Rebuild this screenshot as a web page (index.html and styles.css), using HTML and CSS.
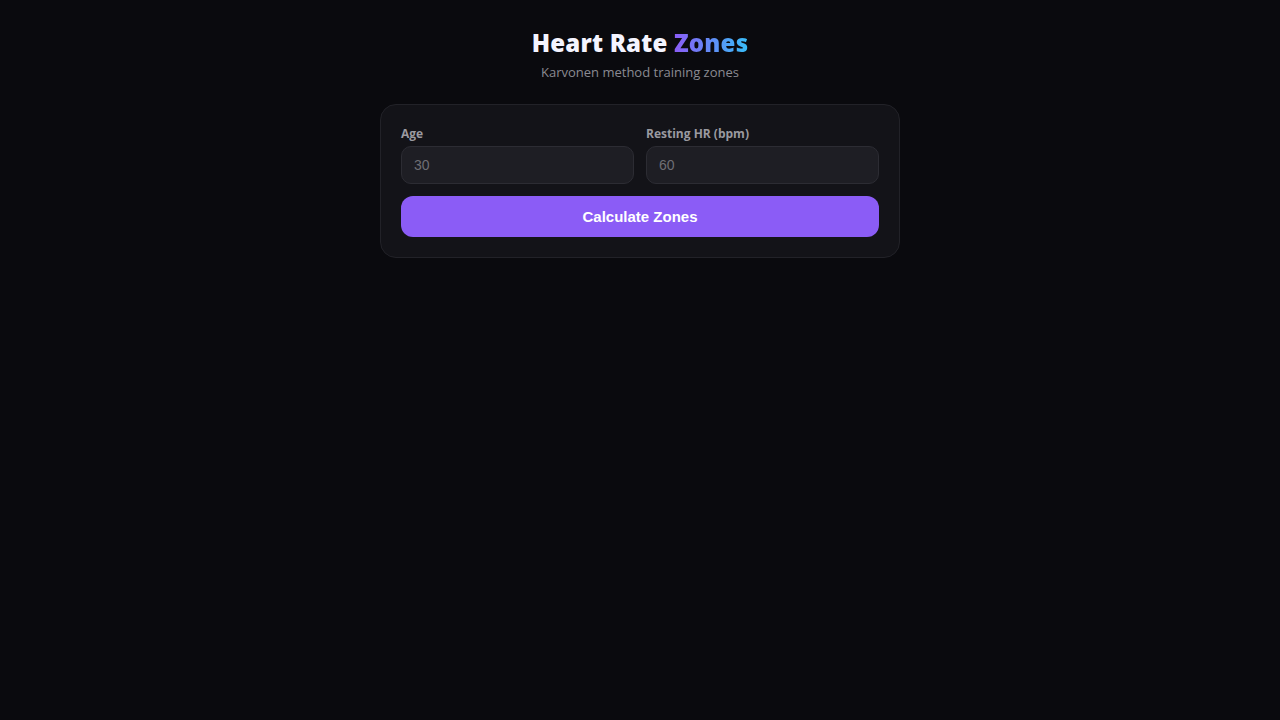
FILE: index.html
```html
<!DOCTYPE html>
<html lang="en">
<head>
<meta charset="utf-8">
<title>Heart Rate Zones</title>
<link rel="stylesheet" href="styles.css">
</head>
<body>
<main class="page">
  <header class="header">
    <h1 class="title">Heart Rate <span class="accent">Zones</span></h1>
    <p class="subtitle">Karvonen method training zones</p>
  </header>
  <section class="card">
    <div class="fields">
      <label class="field">
        <span class="label">Age</span>
        <input class="input" type="text" placeholder="30">
      </label>
      <label class="field">
        <span class="label">Resting HR (bpm)</span>
        <input class="input" type="text" placeholder="60">
      </label>
    </div>
    <button class="btn" type="button">Calculate Zones</button>
  </section>
</main>
</body>
</html>
```

FILE: styles.css
```css
* { box-sizing: border-box; }
html, body { margin: 0; padding: 0; }
body {
  background: #0a0a0e;
  min-height: 720px;
  font-family: "Open Sans", "Noto Sans", sans-serif;
  color: #e5e5ea;
}
.page {
  display: flex;
  flex-direction: column;
  align-items: center;
  padding-top: 28px;
}
.header { text-align: center; margin-bottom: 23px; }
.title {
  margin: 0;
  font-size: 24px;
  font-weight: 800;
  line-height: 30px;
  color: #f4f4ff;
  letter-spacing: 0.2px;
}
.accent {
  background: linear-gradient(90deg, #8b5cf6, #38bdf8);
  -webkit-background-clip: text;
  background-clip: text;
  color: transparent;
}
.subtitle {
  margin: 5px 0 0;
  font-size: 13px;
  line-height: 18px;
  color: #8a8a92;
}
.card {
  width: 520px;
  background: #131318;
  border: 1px solid #222228;
  border-radius: 16px;
  padding: 21px 20px 20px;
  display: flex;
  flex-direction: column;
  gap: 12px;
}
.fields {
  display: grid;
  grid-template-columns: 1fr 1fr;
  gap: 12px;
}
.field { display: flex; flex-direction: column; gap: 4px; }
.label {
  font-size: 12px;
  font-weight: 700;
  color: #9a9aa0;
  line-height: 16px;
}
.input {
  height: 38px;
  background: #1e1e24;
  border: 1px solid #2c2c33;
  border-radius: 10px;
  padding: 0 12px;
  font-family: "Liberation Sans", Arial, sans-serif;
  font-size: 14px;
  color: #e5e5ea;
  outline: none;
}
.input::placeholder { color: #6e6e74; }
.btn {
  height: 41px;
  border: none;
  border-radius: 12px;
  background: #8b5cf6;
  color: #ffffff;
  font-family: "Liberation Sans", Arial, sans-serif;
  font-size: 15px;
  font-weight: 700;
  cursor: pointer;
}
```
